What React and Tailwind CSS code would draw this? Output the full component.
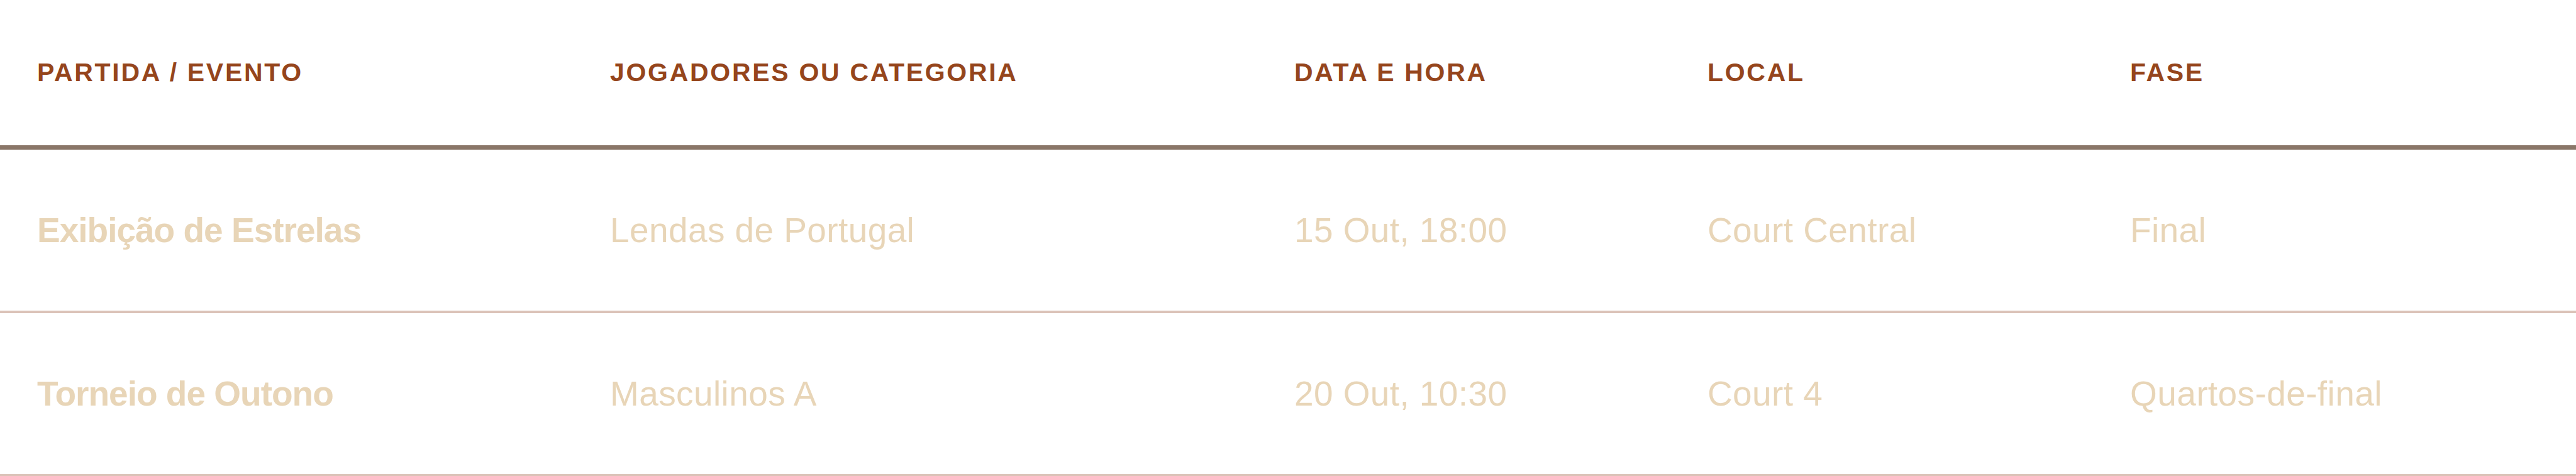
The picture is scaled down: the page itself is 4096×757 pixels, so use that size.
const headers = [
  "Partida / Evento",
  "Jogadores ou Categoria",
  "Data e Hora",
  "Local",
  "Fase",
];

const matches = [
  {
    name: "Exibição de Estrelas",
    players: "Lendas de Portugal",
    when: "15 Out, 18:00",
    court: "Court Central",
    stage: "Final",
  },
  {
    name: "Torneio de Outono",
    players: "Masculinos A",
    when: "20 Out, 10:30",
    court: "Court 4",
    stage: "Quartos-de-final",
  },
];

const cols = "grid grid-cols-[911px_1088px_657px_672px_1fr]";

export default function App() {
  return (
    <div className="w-full bg-white">
      {/* Header row */}
      <div
        className={`${cols} h-[238px] items-center border-b-[7px] border-[#8a7668]`}
      >
        {headers.map((h) => (
          <div
            key={h}
            className="pl-[59px] font-['Liberation_Sans',Arial,sans-serif] text-[41px] font-bold uppercase leading-none tracking-[2.7px] text-[#95451c]"
          >
            {h}
          </div>
        ))}
      </div>

      {/* Body rows */}
      {matches.map((m, i) => (
        <div
          key={m.name}
          className={`${cols} items-center border-b-[#dbc3b8] ${
            i === 0 ? "h-[260px] border-b-4" : "h-[259px] border-b-[3px]"
          } font-['Liberation_Sans',Arial,sans-serif] text-[55px] leading-none text-[#e8d5b7]`}
        >
          <div className="pl-[59px] font-bold tracking-[-1px]">{m.name}</div>
          <div className="pl-[59px] tracking-[0.4px]">{m.players}</div>
          <div className="pl-[59px] tracking-[0.4px]">{m.when}</div>
          <div className="pl-[59px] tracking-[0.4px]">{m.court}</div>
          <div className="pl-[59px] tracking-[0.4px]">{m.stage}</div>
        </div>
      ))}
    </div>
  );
}
